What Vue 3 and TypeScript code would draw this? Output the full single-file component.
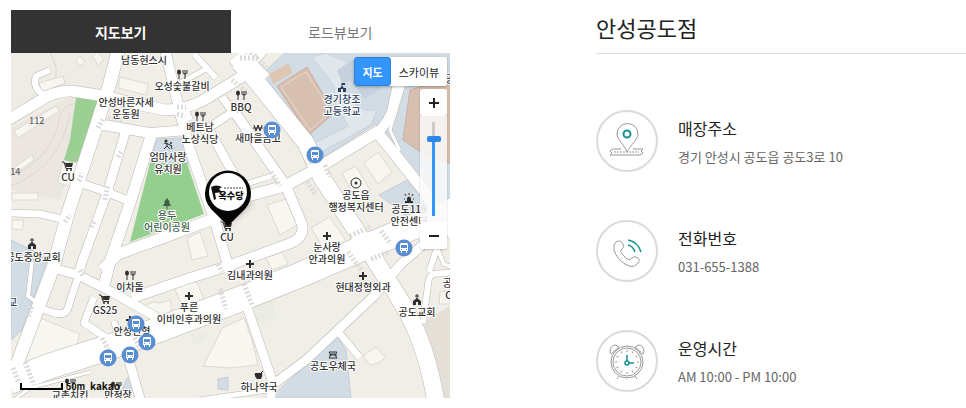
<script setup lang="ts">
import { ref } from 'vue'

type Road = { d: string; w: number }
type Poi = { x: number; y: number; lines: string[]; icon?: string; ix?: number; iy?: number; tone?: string }

const tab = ref<'map' | 'road'>('map')
const view = ref<'map' | 'sky'>('map')
const level = ref(84)

const roads: Road[] = [
  { d: 'M119 48L109 86L95 130L68 213L53 268L14 372', w: 13 },
  { d: 'M8 120L38 102Q55 90 72 91L104 96L132 103L165 110Q185 110 202 101L240 78L262 50', w: 11 },
  { d: 'M60 92L42 94Q32 86 36 76L50 70', w: 6 },
  { d: 'M98 124L150 133L188 130', w: 10 },
  { d: 'M126 130L107 193L82 262L78 275', w: 9 },
  { d: 'M151 136L130 203L110 262L104 286', w: 11 },
  { d: 'M80 183L107 192L131 202', w: 8 },
  { d: 'M8 213L40 214L66 220', w: 7 },
  { d: 'M165 50L178 104L190 150L214 218L230 272', w: 10 },
  { d: 'M180 108L186 122', w: 15 },
  { d: 'M208 128L237 180', w: 9 },
  { d: 'M222 97L233 112L208 128', w: 8 },
  { d: 'M236 114L286 186L302 224Q305 237 291 243L228 266L190 278L132 298', w: 10 },
  { d: 'M236 56L252 76L306 143L322 178L367 247L386 278Q408 310 418 335Q430 365 436 402', w: 17 },
  { d: 'M240 60L262 82', w: 22 },
  { d: 'M102 270L118 254L165 237L213 219L240 198L285 186L316 169L377 132L425 192L454 236', w: 11 },
  { d: 'M240 186L278 174', w: 5 },
  { d: 'M8 382L50 366L110 347L155 331L235 301L300 275L370 245L456 209', w: 25 },
  { d: 'M53 268L78 275L112 292L158 318', w: 9 },
  { d: 'M78 277L68 308Q65 316 54 313L36 307', w: 7 },
  { d: 'M94 297L84 323L108 339', w: 7 },
  { d: 'M114 321L118 335', w: 6 },
  { d: 'M126 350L141 402', w: 9 },
  { d: 'M246 304L273 383L270 402', w: 9 },
  { d: 'M271 386L306 360L337 331L375 295L400 265L428 240', w: 9 },
  { d: 'M336 329L360 358', w: 7 },
  { d: 'M454 272L434 274Q428 276 428 285L423 323', w: 6 },
  { d: 'M398 84L392 112Q385 127 374 136', w: 10 },
  { d: 'M404 84L390 130L400 151', w: 3 },
  { d: 'M32 262L28 296L40 305', w: 4 },
  { d: 'M437 248L429 272', w: 6 },
  { d: 'M437 248L444 264L454 268', w: 4 },
  { d: 'M8 404L30 388L90 372', w: 3 },
  { d: 'M200 400L274 389', w: 5 },
  { d: 'M194 54L216 78', w: 6 },
  { d: 'M178 84L208 68', w: 5 },
]

const crossings = [
  'M240 58L258 58', 'M232 80L248 93', 'M254 55L266 68', 'M108 118L122 120', 'M177 107L186 107',
  'M177 114L185 116', 'M98 128L104 118', 'M79 181L82 173', 'M105 200L108 184', 'M91 227L95 220',
  'M305 164L323 156', 'M307 182L315 194', 'M325 165L330 177', 'M350 236L372 226', 'M348 252L361 270',
  'M381 231L391 244', 'M371 259L389 252', 'M220 289L226 309', 'M244 284L252 305', 'M102 338L111 354',
  'M133 334L141 350', 'M25 362L34 385', 'M13 368L19 383', 'M271 172L280 186', 'M28 316L32 306',
  'M118 157L122 150', 'M65 222L70 215', 'M218 264L222 272', 'M80 270L84 277',
]

const buildings = [
  'M76 60L80 56L85 62L80 66Z', 'M92 56L98 52L104 60L98 65Z', 'M120 77L148 84L146 95L118 88Z',
  'M39 83L63 76L65 83L42 92Z', 'M14 131L56 106L59 111L18 138Z', 'M15 167L32 155L34 160L17 172Z',
  'M12 193L38 193L38 200L12 200Z', 'M12 220L24 220L22 230L12 229Z', 'M62 164L78 162L74 187L58 183Z',
  'M342 173L356 166L370 190L355 198Z', 'M364 163L378 152L392 172L378 184Z', 'M311 228L330 217L352 250L332 262Z',
  'M267 205L286 199L297 225L280 235Z', 'M187 238L200 232L208 256L192 260Z', 'M266 258L282 252L288 264L272 270Z',
  'M234 266L250 260L256 274L240 280Z', 'M174 287L196 280L205 302L184 310Z',
  'M363 356L376 347L385 357L379 363L370 365Z', 'M139 308L153 302L160 303L170 300L172 312L162 315Z',
  'M222 328L244 318L252 340L258 365L230 368L203 366L214 345Z', 'M440 292L450 290L450 304L439 304Z',
  'M40 318L80 334L76 346L24 364Z',
]

const blues = [
  'M262 74L288 50L454 50L454 226L425 190L388 136L375 124L322 158Z',
  'M157 139L183 138L190 164L150 164Z', 'M11 240L48 258L22 330L11 340Z',
  'M379 195L407 180L428 206L420 227Z', 'M270 398L337 336L346 350L351 398Z',
  'M218 379L228 377L228 390L218 389Z', 'M127 378L138 380L137 391L122 390Z',
]

const pois: Poi[] = [
  { x: 144, y: 64, lines: ['남동현스시'] },
  { x: 182, y: 90, lines: ['오성숯불갈비'], icon: 'fork', ix: 182, iy: 74 },
  { x: 126, y: 106, lines: ['안성바른자세', '운동원'] },
  { x: 241, y: 111, lines: ['BBQ'], icon: 'fork', ix: 241, iy: 95 },
  { x: 200, y: 131, lines: ['베트남', '노상식당'], icon: 'fork', ix: 200, iy: 116 },
  { x: 258, y: 142, lines: ['새마을금고'], icon: 'won', ix: 258, iy: 128 },
  { x: 342, y: 103, lines: ['경기창조', '고등학교'], icon: 'school', ix: 342, iy: 88, tone: 'navy' },
  { x: 168, y: 161, lines: ['엄마사랑', '유치원'], icon: 'kid', ix: 168, iy: 144 },
  { x: 167, y: 219, lines: ['용두', '어린이공원'], icon: 'tree', ix: 167, iy: 204, tone: 'park' },
  { x: 68, y: 181, lines: ['CU'], icon: 'cart', ix: 68, iy: 166 },
  { x: 227, y: 241, lines: ['CU'], icon: 'cart', ix: 227, iy: 226 },
  { x: 356, y: 199, lines: ['공도읍', '행정복지센터'], icon: 'office', ix: 356, iy: 183 },
  { x: 409, y: 213, lines: ['공도119', '안전센터'], icon: 'siren', ix: 409, iy: 198 },
  { x: 327, y: 251, lines: ['눈사랑', '안과의원'], icon: 'cross', ix: 327, iy: 236 },
  { x: 250, y: 279, lines: ['김내과의원'], icon: 'cross', ix: 250, iy: 264 },
  { x: 363, y: 291, lines: ['현대정형외과'], icon: 'cross', ix: 363, iy: 276 },
  { x: 33, y: 261, lines: ['공도중앙교회'], icon: 'church', ix: 32, iy: 244 },
  { x: 8, y: 306, lines: ['학교'], tone: 'navy' },
  { x: 130, y: 291, lines: ['이차돌'], icon: 'fork', ix: 130, iy: 275 },
  { x: 105, y: 314, lines: ['GS25'], icon: 'cart', ix: 105, iy: 299 },
  { x: 189, y: 311, lines: ['푸른', '이비인후과의원'], icon: 'cross', ix: 189, iy: 296 },
  { x: 132, y: 335, lines: ['안성인형'], icon: 'cross', ix: 130, iy: 320 },
  { x: 417, y: 316, lines: ['공도교회'], icon: 'church', ix: 417, iy: 300 },
  { x: 452, y: 287, lines: ['공도', 'CU'] },
  { x: 333, y: 370, lines: ['공도우체국'], icon: 'post', ix: 333, iy: 355 },
  { x: 259, y: 391, lines: ['하나약국'], icon: 'pill', ix: 259, iy: 375 },
  { x: 70, y: 399, lines: ['교촌치킨'], icon: 'fork', ix: 70, iy: 383 },
  { x: 118, y: 399, lines: ['만정장'], icon: 'fork', ix: 116, iy: 386 },
  { x: 455, y: 83, lines: ['공도'], tone: 'navy' },
]

const buses = [[272, 130], [315, 155], [404, 248], [136, 324], [147, 342], [130, 355], [108, 358]]

const info = [
  { kind: 'pin', title: '매장주소', text: '경기 안성시 공도읍 공도3로 10' },
  { kind: 'phone', title: '전화번호', text: '031-655-1388' },
  { kind: 'clock', title: '운영시간', text: 'AM 10:00 - PM 10:00' },
]

const ticks = Array.from({ length: 12 }, (_, i) => i * 30)
</script>

<template>
  <main class="store">
    <section class="location">
      <div class="tabs">
        <button type="button" :class="{ on: tab === 'map' }" @click="tab = 'map'">지도보기</button>
        <button type="button" :class="{ on: tab === 'road' }" @click="tab = 'road'">로드뷰보기</button>
      </div>
      <div class="map">
        <svg class="canvas" viewBox="11 53 439 345" role="img" aria-label="안성공도점 지도">
          <defs>
            <g id="fork">
              <ellipse cx="-3" cy="-2" rx="2" ry="2.500" class="i-fill" />
              <path d="M-3 0V5M1 -4V-1Q1 0 3 0Q5 0 5 -1V-4M3 -4V5" class="i-line" />
            </g>
            <g id="cart">
              <path d="M-3 -3H5L4 1H-2Z" class="i-fill" />
              <path d="M-6 -4H-4L-2 2.500H4" class="i-line" />
              <circle cx="-1" cy="4" r="1" class="i-fill" /><circle cx="3" cy="4" r="1" class="i-fill" />
            </g>
            <g id="cross"><path d="M-4 0H4M0 -4V4" class="i-bold" /></g>
            <g id="church">
              <path d="M-4 5V1L0 -2L4 1V5H1V2H-1V5Z" class="i-fill" />
              <path d="M0 -6V0M-2 -4H2" class="i-line" />
            </g>
            <g id="school">
              <path d="M-4 4V0H-2L0 -2L2 0H4V4H1V1H-1V4Z" class="i-fill" />
              <path d="M0 -5H3V-3H0Z" class="i-fill" /><path d="M0 -1V-5" class="i-line" />
            </g>
            <g id="tree">
              <path d="M0 -6L3 -2H2L4 2H-4L-2 -2H-3Z" class="i-fill" /><path d="M0 1V5" class="i-line" />
            </g>
            <g id="kid">
              <circle cx="-2" cy="-3" r="1.500" class="i-fill" /><circle cx="3" cy="-1" r="1" class="i-fill" />
              <path d="M-4 -1L0 0L4 2M-1 -1L-1 2L-4 5M-1 2L2 5M3 1L4 5" class="i-line" />
            </g>
            <g id="office"><circle r="5" class="i-line" /><circle r="1.500" class="i-fill" /></g>
            <g id="siren">
              <path d="M-2 3V0Q0 -3 2 0V3H4V5H-4V3Z" class="i-fill" />
              <path d="M0 -3V-5M-3 -2L-4 -4M3 -2L4 -4M-4 1H-5M4 1H5" class="i-line" />
            </g>
            <g id="won"><path d="M-4 -3L-2 3L0 -3L2 3L4 -3M-5 0H5" class="i-line" /></g>
            <g id="post"><path d="M-4 -3H4L2 0L4 3H-4L-2 0ZM-4 0H4M-2 -1H2" class="i-line" /></g>
            <g id="pill">
              <path d="M-4 -2H3Q4 1 2 4H-2Q-5 1 -4 -2Z" class="i-fill" /><path d="M1 -1L4 -4" class="i-line" />
            </g>
            <g id="bus">
              <circle r="8.500" fill="#5a8ed2" />
              <path d="M-4 -3Q-4 -5 -3 -5H3Q4 -5 4 -3V3H3V5H2V3H-2V5H-3V3H-4Z" fill="#fff" />
              <path d="M-3 -3H3V0H-3ZM-3 1H-2V2H-3ZM2 1H3V2H2Z" fill="#5a8ed2" />
            </g>
            <filter id="soft" x="-50%" y="-50%" width="200%" height="200%"><feGaussianBlur stdDeviation="3" /></filter>
          </defs>

          <rect x="11" y="53" width="439" height="345" fill="#f1eee7" />
          <path d="M11 53H115L100 96L60 90L11 114Z" fill="#efebe5" />
          <path d="M11 128L70 96L88 106L60 200L11 190Z" fill="#ebe7e0" />
          <path d="M50 53Q60 68 54 82M11 176Q52 160 60 116Q64 104 75 104M11 186Q62 166 70 112" class="contour" />
          <path d="M422 322L450 306V398H440Z" fill="#e4e0d8" />
          <path d="M252 304L272 300L278 318L258 324ZM190 335L206 332L206 340L194 346Z" fill="#eaece4" />

          <path v-for="b in blues" :key="b" :d="b" class="blue" />
          <path d="M277 86L307 67L334 113L309 135Z" class="field" />
          <path d="M269 74L289 63L292 73L273 84Z" fill="#dec6b2" />
          <path d="M410 90L450 78V163L429 158L403 140Z" class="field" />
          <path d="M281 87L306 72L331 112L310 130Z" class="outline" />
          <path d="M312 57L326 53L348 62L344 96L364 110L377 110L371 125L319 153L311 145L348 126L336 105L334 86Z" class="annex" />
          <path d="M337 70L356 58L382 88L365 99L350 80L342 83Z" fill="#c6d1dd" />

          <path d="M77 92H100L105 96L101 104L79 164L64 160L70 140L73 118Z" fill="#9ccf94" />
          <path d="M150 163H187L204 214L130 242Z" fill="#95cf90" />

          <path v-for="b in buildings" :key="b" :d="b" class="building" />
          <path v-for="r in roads" :key="'c' + r.d" :d="r.d" class="road edge" :stroke-width="r.w + 1" />
          <path v-for="r in roads" :key="'f' + r.d" :d="r.d" class="road" :stroke-width="r.w" />
          <path v-for="c in crossings" :key="c" :d="c" class="crossing" />

          <g v-for="p in pois" :key="p.lines[0] + p.x" class="poi" :class="p.tone">
            <use v-if="p.icon" :href="'#' + p.icon" :x="p.ix" :y="p.iy" />
            <text v-for="(line, i) in p.lines" :key="line" :x="p.x" :y="p.y + i * 12">{{ line }}</text>
          </g>
          <text x="29" y="124" class="num">112</text>
          <text x="5" y="175" class="num">114</text>

          <use v-for="b in buses" :key="b.join()" href="#bus" :x="b[0]" :y="b[1]" />

          <path d="M228 225L252 202L240 198Z" fill="#000" opacity=".35" filter="url(#soft)" />
          <path d="M228 226L211 209A23 23 0 1 1 245 209Z" fill="#060606" />
          <circle cx="228" cy="192" r="19" fill="#fff" />
          <path d="M211 187Q216 184 222 187L219 189L222 192L215 193L216 199L214 200Z" fill="#111" />
          <path d="M224 188H243" stroke="#444" stroke-dasharray="2 1" />
          <text x="231" y="199" class="brand">옥수당</text>

          <path d="M21 383V389H62V383" class="scale" />
          <text x="66" y="390" class="meter">50m</text>
          <text x="90" y="390" class="kakao">kakao</text>
        </svg>

        <div class="types">
          <button type="button" :class="{ on: view === 'map' }" @click="view = 'map'">지도</button>
          <button type="button" :class="{ on: view === 'sky' }" @click="view = 'sky'">스카이뷰</button>
        </div>
        <div class="zoom">
          <button type="button" aria-label="확대" @click="level = Math.min(100, level + 8)">
            <svg viewBox="0 0 12 12"><path d="M1 6H11M6 1V11" /></svg>
          </button>
          <div class="rail">
            <input v-model.number="level" type="range" min="0" max="100" aria-label="지도 확대 수준" />
          </div>
          <button type="button" aria-label="축소" @click="level = Math.max(0, level - 8)">
            <svg viewBox="0 0 12 12"><path d="M1 6H11" /></svg>
          </button>
        </div>
      </div>
    </section>

    <section class="details">
      <h1>안성공도점</h1>
      <ul>
        <li v-for="item in info" :key="item.kind">
          <span class="badge">
            <svg v-if="item.kind === 'pin'" viewBox="0 0 62 62">
              <path d="M25 39H17L14 41L16 43L14 45H44L47 43L45 41L47 39H37" class="g" />
              <path d="M18 42H43" class="g" stroke-dasharray="2 1" />
              <path d="M31 42C28 34 21 30 21 24A10 10 0 0 1 42 24C42 30 34 35 31 42Z" class="g white" />
              <circle cx="31" cy="24" r="3.500" class="t" />
            </svg>
            <svg v-else-if="item.kind === 'phone'" viewBox="0 0 62 62">
              <path d="M20 22Q24 19 27 24Q29 27 26 29Q23 31 26 34L31 39Q34 41 36 38Q38 35 42 38Q45 40 41 44Q37 49 29 44Q21 39 18 30Q17 25 20 22Z" class="g" />
              <path d="M32 25Q37 26 39 32M32 20Q42 22 45 32" class="t thin" />
            </svg>
            <svg v-else viewBox="0 0 62 62">
              <circle cx="31" cy="32" r="16" class="g" /><circle cx="31" cy="32" r="14" class="g" />
              <path d="M14 22Q14 15 20 15L23 17L15 24ZM48 22Q48 15 42 15L39 17L47 24ZM23 46L21 49M39 46L41 49" class="g" />
              <path v-for="a in ticks" :key="a" d="M31 20V22" class="g" :transform="`rotate(${a} 31 32)`" />
              <path d="M31 25V31M33 33H38" class="t thin" /><circle cx="31" cy="33" r="2" class="t thin" />
            </svg>
          </span>
          <div class="copy">
            <h2>{{ item.title }}</h2>
            <p>{{ item.text }}</p>
          </div>
        </li>
      </ul>
    </section>
  </main>
</template>

<style>
body {
  margin: 0;
  background: #fff;
}
</style>

<style scoped>
.store {
  display: grid;
  grid-template-columns: minmax(0, 439fr) minmax(0, 370fr);
  gap: 146px;
  padding: 10px 0 10px 11px;
  font-family: "Noto Sans CJK KR", "Noto Sans", sans-serif;
}
button {
  border: 0;
  padding: 0;
  background: #fff;
  font-family: inherit;
  cursor: pointer;
}
.tabs {
  display: grid;
  grid-template-columns: 1fr 1fr;
  height: 43px;
}
.tabs button {
  font-size: 14px;
  color: #777;
}
.tabs button.on {
  background: #333;
  color: #fff;
  font-weight: 700;
}
.map {
  position: relative;
}
.canvas {
  display: block;
  width: 100%;
}
.blue { fill: #d2dce5; stroke: #c3ced8; }
.field { fill: #d8c0b0; stroke: #cdaea0; }
.outline { fill: none; stroke: #e8d9cf; }
.annex { fill: #dfe6ec; stroke: #c9d3db; }
.building { fill: #f8f6f1; stroke: #dedad2; }
.contour { fill: none; stroke: #dcd8cf; }
.road { fill: none; stroke: #fff; stroke-linejoin: round; }
.edge { stroke: #b9b6b0; }
.crossing { fill: none; stroke: #dddbd8; stroke-width: 5; stroke-dasharray: 2 2; }
.poi { color: #2e2e2e; }
.navy { color: #2c405f; }
.park { color: #3e6148; }
.i-fill { fill: currentColor; }
.i-line { fill: none; stroke: currentColor; }
.i-bold { fill: none; stroke: currentColor; stroke-width: 2; }
.canvas text {
  font-size: 10px;
  font-weight: 500;
  fill: currentColor;
}
.poi text {
  text-anchor: middle;
  stroke: #fff;
  stroke-width: 2px;
  stroke-linejoin: round;
  paint-order: stroke;
}
.canvas .num { fill: #666; font-size: 9px; }
.canvas .brand { font-size: 9px; font-weight: 900; text-anchor: middle; fill: #111; }
.canvas .meter { font-size: 9px; font-weight: 700; fill: #111; }
.canvas .kakao { font-size: 10px; font-weight: 700; fill: #111; }
.scale { fill: none; stroke: #000; stroke-width: 2; }
.types {
  position: absolute;
  top: 4px;
  right: 3px;
  display: grid;
  grid-template-columns: 37px 56px;
  height: 29px;
  border-radius: 3px;
  background: #fff;
  box-shadow: 0 1px 3px rgba(0, 0, 0, 0.3);
}
.types button {
  border-radius: 3px;
  font-size: 11px;
  color: #222;
}
.types button.on {
  border: 1px solid #2a80df;
  background: #3396ff;
  color: #fff;
  font-weight: 700;
}
.zoom {
  position: absolute;
  top: 36px;
  right: 3px;
  width: 27px;
  border-radius: 3px;
  box-shadow: 0 1px 2px rgba(0, 0, 0, 0.2);
}
.zoom button {
  display: grid;
  place-items: center;
  width: 27px;
  height: 27px;
  border-radius: 3px;
}
.zoom svg {
  width: 12px;
  stroke: #222;
  stroke-width: 2;
}
.rail {
  display: flex;
  justify-content: center;
  padding: 6px 0;
  background: rgba(249, 249, 249, 0.85);
}
.rail input {
  appearance: none;
  writing-mode: vertical-lr;
  direction: rtl;
  width: 14px;
  height: 94px;
  margin: 0;
  background: linear-gradient(#ccc 0 14px, #3396ff 14px) center / 3px 100% no-repeat;
}
.rail input::-webkit-slider-thumb {
  appearance: none;
  width: 14px;
  height: 6px;
  border-radius: 2px;
  background: #2f86e8;
}
h1 {
  margin: 0;
  height: 43px;
  border-bottom: 1px solid #ddd;
  font-size: 22px;
  line-height: 34px;
  font-weight: 400;
  color: #222;
}
ul {
  display: grid;
  gap: 48px;
  margin: 56px 0 0;
  padding: 0;
  list-style: none;
}
li {
  display: flex;
  align-items: center;
  gap: 20px;
}
.badge {
  box-sizing: border-box;
  flex: none;
  width: 62px;
  height: 62px;
  border: 2px solid #dadada;
  border-radius: 50%;
}
.badge svg {
  display: block;
  width: 62px;
  margin: -2px;
}
.g { fill: none; stroke: #999; }
.white { fill: #fff; }
.t { fill: none; stroke: #16938f; stroke-width: 2; }
.thin { stroke-width: 1.500px; }
.copy {
  padding-top: 2px;
}
h2 {
  margin: 0 0 4px;
  font-size: 16px;
  line-height: 26px;
  font-weight: 400;
  color: #222;
}
p {
  margin: 0;
  font-size: 13px;
  line-height: 24px;
  color: #666;
}
</style>
